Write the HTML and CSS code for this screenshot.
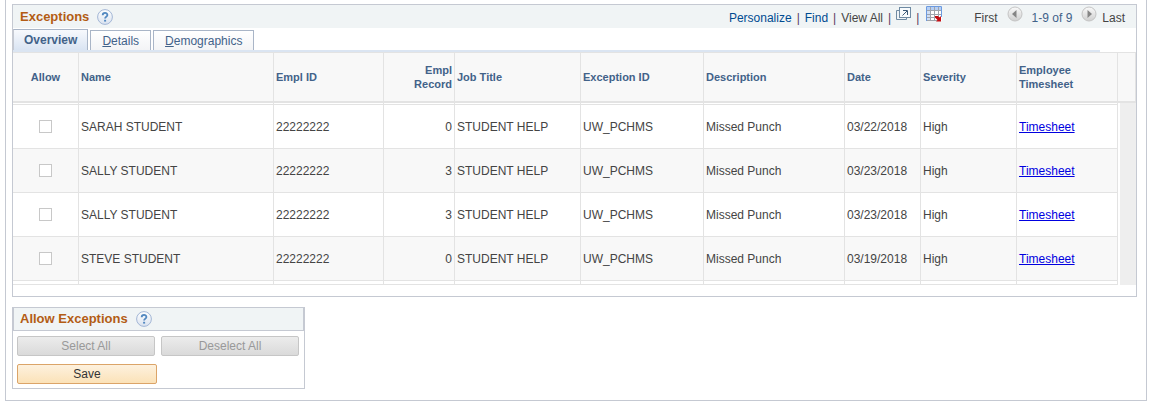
FILE: index.html
```html
<!DOCTYPE html>
<html lang="en">
<head>
    <meta charset="UTF-8">
    <meta name="viewport" content="width=device-width, initial-scale=1.0">
    <title>Exceptions</title>
    <link rel="stylesheet" href="styles.css">
</head>
<body>
    <main class="page">
        <section class="panel">
            <header class="panel-header">
                <h2>Exceptions</h2>
                <button class="icon-btn" aria-label="Help">
                    <svg class="help-icon" viewBox="0 0 16 16"><use href="#help"/></svg>
                </button>
                <nav class="toolbar">
                    <a href="#" class="tool-link">Personalize</a>
                    <span class="sep">|</span>
                    <a href="#" class="tool-link">Find</a>
                    <span class="sep">|</span>
                    <span>View All</span>
                    <span class="sep">|</span>
                    <button class="icon-btn raised" aria-label="Zoom">
                        <svg width="15" height="14" viewBox="0 0 15 14">
                            <path d="M3.5 3.5h-3v9h10v-3" fill="#eef3f7" stroke="#6f8aa3"/>
                            <rect x="3.5" y=".5" width="11" height="10" fill="#f8fbfd" stroke="#6f8aa3"/>
                            <path d="M6.5 8.5l4.500-4.500M7 3.500h4.500v4.500" fill="none" stroke="#3c5a78"/>
                        </svg>
                    </button>
                    <span class="sep">|</span>
                    <button class="icon-btn raised download" aria-label="Download">
                        <svg width="16" height="16" viewBox="0 0 16 16">
                            <path d="M0 0h16v15H0z" fill="#fff"/>
                            <path d="M1 1h14v3H1z" fill="#b5cff5"/>
                            <path d="M1 4h4v10H1z" fill="#d0dff5"/>
                            <path d="M4.500 1v14M8.500 1v14M12.500 1v14M1 4.500h14M1 8.500h14M1 11.500h14M1 14.500h14" fill="none" stroke="#a0a4ab"/>
                            <path d="M.5 15V.5h15V11" fill="none" stroke="#6c9ae0"/>
                            <path d="M9 10h3l1.500 1.500L15 10v5.500h-5l1.500-1.500L9 11.500z" fill="#c40d12"/>
                        </svg>
                    </button>
                    <span>First</span>
                    <button class="icon-btn raised arrow" aria-label="Previous rows">
                        <svg width="16" height="16" viewBox="0 0 16 16"><use href="#arrow"/></svg>
                    </button>
                    <span class="range">1-9 of 9</span>
                    <button class="icon-btn raised arrow next" aria-label="Next rows">
                        <svg width="16" height="16" viewBox="0 0 16 16"><use href="#arrow"/></svg>
                    </button>
                    <span>Last</span>
                </nav>
            </header>
            <div class="tabs">
                <button class="tab active">Overview</button>
                <button class="tab"><u>D</u>etails</button>
                <button class="tab"><u>D</u>emographics</button>
            </div>
            <table class="grid">
                <colgroup>
                    <col class="col-allow">
                    <col class="col-name">
                    <col class="col-id">
                    <col class="col-record">
                    <col class="col-title">
                    <col class="col-exception">
                    <col class="col-desc">
                    <col class="col-date">
                    <col class="col-severity">
                    <col class="col-timesheet">
                    <col class="col-scroll">
                </colgroup>
                <thead>
                    <tr>
                        <th class="center">Allow</th>
                        <th>Name</th>
                        <th>Empl ID</th>
                        <th class="right">Empl<br>Record</th>
                        <th>Job Title</th>
                        <th>Exception ID</th>
                        <th>Description</th>
                        <th>Date</th>
                        <th>Severity</th>
                        <th>Employee<br>Timesheet</th>
                        <th></th>
                    </tr>
                </thead>
                <tbody>
                    <!-- edge of the row scrolled off the top -->
                    <tr class="cut-top">
                        <td></td><td></td><td></td><td></td><td></td><td></td><td></td><td></td><td></td><td></td>
                        <td class="scroll" rowspan="6"></td>
                    </tr>
                    <tr>
                        <td class="center"><input type="checkbox" aria-label="Allow"></td>
                        <td>SARAH STUDENT</td>
                        <td>22222222</td>
                        <td class="right">0</td>
                        <td>STUDENT HELP</td>
                        <td>UW_PCHMS</td>
                        <td>Missed Punch</td>
                        <td>03/22/2018</td>
                        <td>High</td>
                        <td><a href="#">Timesheet</a></td>
                    </tr>
                    <tr class="alt">
                        <td class="center"><input type="checkbox" aria-label="Allow"></td>
                        <td>SALLY STUDENT</td>
                        <td>22222222</td>
                        <td class="right">3</td>
                        <td>STUDENT HELP</td>
                        <td>UW_PCHMS</td>
                        <td>Missed Punch</td>
                        <td>03/23/2018</td>
                        <td>High</td>
                        <td><a href="#">Timesheet</a></td>
                    </tr>
                    <tr>
                        <td class="center"><input type="checkbox" aria-label="Allow"></td>
                        <td>SALLY STUDENT</td>
                        <td>22222222</td>
                        <td class="right">3</td>
                        <td>STUDENT HELP</td>
                        <td>UW_PCHMS</td>
                        <td>Missed Punch</td>
                        <td>03/23/2018</td>
                        <td>High</td>
                        <td><a href="#">Timesheet</a></td>
                    </tr>
                    <tr class="alt">
                        <td class="center"><input type="checkbox" aria-label="Allow"></td>
                        <td>STEVE STUDENT</td>
                        <td>22222222</td>
                        <td class="right">0</td>
                        <td>STUDENT HELP</td>
                        <td>UW_PCHMS</td>
                        <td>Missed Punch</td>
                        <td>03/19/2018</td>
                        <td>High</td>
                        <td><a href="#">Timesheet</a></td>
                    </tr>
                    <tr class="cut-bottom">
                        <td></td><td></td><td></td><td></td><td></td><td></td><td></td><td></td><td></td><td></td>
                    </tr>
                </tbody>
            </table>
        </section>

        <section class="allow-box">
            <header class="allow-header">
                <h2>Allow Exceptions</h2>
                <button class="icon-btn" aria-label="Help">
                    <svg class="help-icon" viewBox="0 0 16 16"><use href="#help"/></svg>
                </button>
            </header>
            <div class="actions">
                <button class="btn" disabled>Select All</button>
                <button class="btn" disabled>Deselect All</button>
                <button class="btn save">Save</button>
            </div>
        </section>
    </main>

    <!-- shared icons -->
    <svg class="defs" aria-hidden="true">
        <defs>
            <linearGradient id="ball" x1="0" y1="0" x2="0" y2="1">
                <stop offset="0" stop-color="#fff"/>
                <stop offset="1" stop-color="#d9e2ef"/>
            </linearGradient>
            <linearGradient id="disc" x1="0" y1="0" x2="0" y2="1">
                <stop offset="0" stop-color="#fafafa"/>
                <stop offset="1" stop-color="#cfcfcf"/>
            </linearGradient>
            <symbol id="help" viewBox="0 0 16 16">
                <circle cx="8" cy="8" r="7.400" fill="url(#ball)" stroke="#a3b6d6"/>
                <path d="M5.700 6.300c0-3.100 4.700-3.100 4.700-.3 0 1.600-2.300 1.700-2.300 3.600" fill="none" stroke="#5288c0" stroke-width="1.800"/>
                <path d="M7.100 10.800h2v1.800h-2z" fill="#5288c0"/>
            </symbol>
            <symbol id="arrow" viewBox="0 0 16 16">
                <circle cx="8" cy="8" r="7" fill="url(#disc)" stroke="#c4c4c4"/>
                <path d="M9.500 4v8L5 8z" fill="#858585"/>
            </symbol>
        </defs>
    </svg>
</body>
</html>
```
FILE: styles.css
```css
* {
    box-sizing: border-box;
}

body {
    margin: 0;
    background-color: #fff;
    color: #444;
    font-family: Arial, "Liberation Sans", sans-serif;
    font-size: 12px;
    line-height: 14px;
}

button,
input {
    font-family: inherit;
    font-size: 12px;
    line-height: 14px;
}

h2 {
    margin: 0;
    color: #b35c14;
    font-size: 13px;
    line-height: 16px;
}

.page {
    margin: 0 2px 0 5px;
    padding: 4px 9px 11px 6px;
    border: 1px solid #c5c9d2;
    border-top: none;
}

.panel {
    padding-bottom: 11px;
    border: 1px solid #c5c9d2;
}

.panel-header {
    display: flex;
    align-items: center;
    gap: 8px;
    height: 23px;
    padding: 0 11px 0 7px;
    background-color: #f0f4f5;
}

.icon-btn {
    display: block;
    padding: 0;
    border: none;
    background: none;
    cursor: pointer;
}

.icon-btn svg {
    display: block;
}

.help-icon {
    width: 16px;
    height: 16px;
}

.toolbar {
    display: flex;
    align-items: center;
    gap: 5px;
    height: 23px;
    margin-left: auto;
    padding-top: 2px;
}

.tool-link {
    color: #004b91;
    text-decoration: none;
}

.sep {
    color: #5a3a5e;
}

/* toolbar icons stand a little above the text */
.raised {
    margin-bottom: 8px;
}

.download {
    margin: 0 27px 7px 2px;
}

.arrow {
    margin: 0 4px 7px;
}

.next {
    margin-right: 0;
}

.next svg {
    transform: scaleX(-1);
}

.range {
    color: #426289;
}

.tabs {
    display: flex;
    align-items: flex-end;
    gap: 2px;
    height: 24px;
    margin-right: 36px;
    border-bottom: 2px solid #dbe5f2;
}

.tab {
    height: 20px;
    padding: 0 11px;
    border: 1px solid #a9b5c7;
    border-bottom: none;
    background: linear-gradient(#fff, #f3f4f6);
    color: #426289;
    cursor: pointer;
}

.tab.active {
    height: 21px;
    padding: 0 10px;
    border-left-color: #c5c9d2;
    background: linear-gradient(#f7f9fd, #d9e4f3);
    font-weight: bold;
}

.grid {
    width: 100%;
    table-layout: fixed;
    border-collapse: separate;
    border-spacing: 0;
}

.col-allow { width: 66px; }
.col-id { width: 110px; }
.col-record { width: 71px; }
.col-title { width: 126px; }
.col-exception { width: 123px; }
.col-desc { width: 141px; }
.col-date { width: 76px; }
.col-severity { width: 96px; }
.col-timesheet { width: 101px; }
.col-scroll { width: 18px; }

.grid th,
.grid td {
    padding: 0 2px;
    border-right: 1px solid #e3e3e3;
    border-bottom: 1px solid #e3e3e3;
    text-align: left;
    white-space: nowrap;
}

.grid th {
    height: 51px;
    border-top: 1px solid #e3e3e3;
    border-bottom-width: 2px;
    background-color: #f8f8f8;
    color: #426289;
    font-size: 11px;
}

.grid td {
    height: 44px;
}

.grid .alt td {
    background-color: #f8f8f8;
}

.grid .center {
    text-align: center;
}

.grid .right {
    text-align: right;
}

.grid .cut-top td {
    height: 2px;
}

.grid .cut-bottom td {
    height: 4px;
}

.grid td.scroll {
    height: auto;
    border: none;
    border-left: 2px solid #fff;
    background-color: #eee;
}

.grid a {
    color: #0000e0;
}

.grid input {
    display: block;
    width: 13px;
    height: 13px;
    margin: 0 auto;
    border: 1px solid #c8c8c8;
    background-color: #fff;
    appearance: none;
}

.grid input:checked {
    background-color: #426289;
}

.allow-box {
    width: 293px;
    margin-top: 10px;
    border: 1px solid #c5c9d2;
}

.allow-header {
    display: flex;
    align-items: center;
    gap: 8px;
    height: 23px;
    padding: 0 6px;
    border: 1px solid #c5c9d2;
    border-top: none;
    background-color: #f0f4f5;
}

.actions {
    display: flex;
    flex-wrap: wrap;
    gap: 8px 6px;
    padding: 5px 4px 4px;
}

.btn {
    width: 138px;
    height: 20px;
    padding: 0;
    border: 1px solid #c6c6c6;
    border-radius: 2px;
    background: linear-gradient(#ececec, #dadada);
    color: #999;
}

.save {
    width: 140px;
    border-color: #dba468;
    background: linear-gradient(#fdf1de, #fbe2b8);
    color: #333;
    cursor: pointer;
}

.defs {
    position: absolute;
    width: 0;
    height: 0;
}
```
